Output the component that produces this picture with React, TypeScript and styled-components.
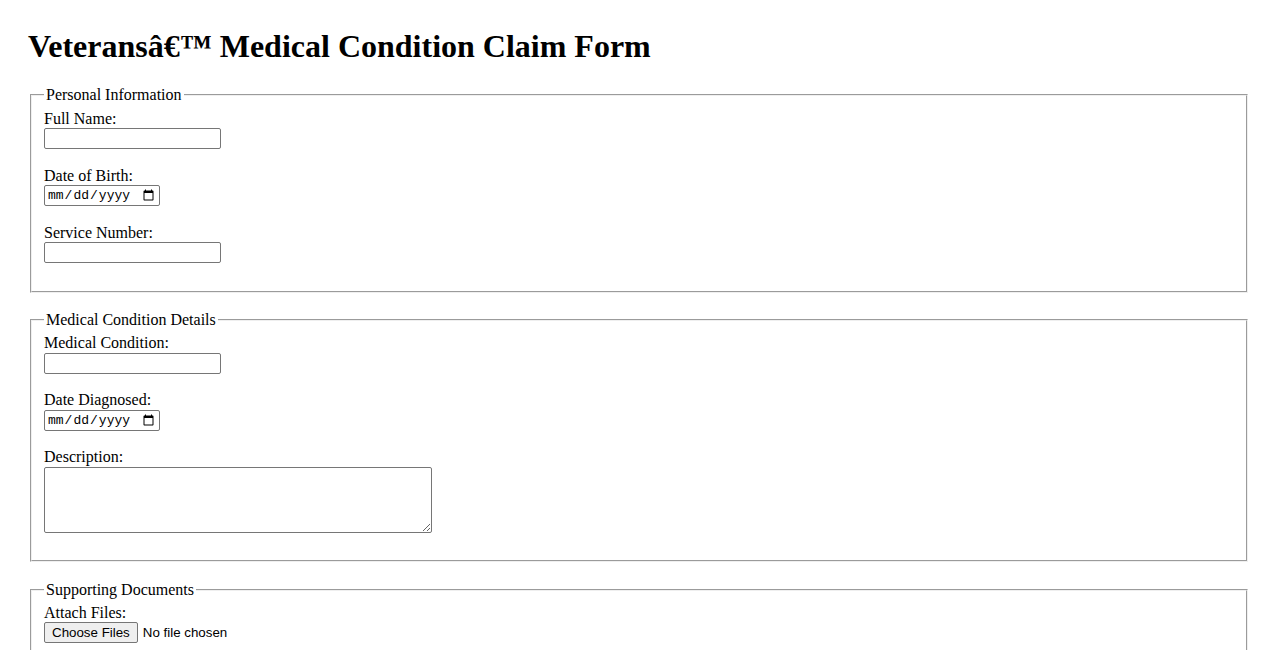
import React from "react";
import styled, { createGlobalStyle } from "styled-components";

const GlobalStyle = createGlobalStyle`
  html {
    scrollbar-width: none;
  }
  html::-webkit-scrollbar {
    display: none;
  }
  body {
    margin: 0;
    background: #ffffff;
    color: #000000;
    font-family: "Liberation Serif", "Times New Roman", serif;
    font-size: 16px;
    line-height: 1.15;
  }
`;

const Page = styled.main`
  padding: 28px 28px 40px 28px;
`;

const Title = styled.h1`
  margin: 0 0 21.44px;
  font-size: 32px;
  font-weight: bold;
  line-height: 1.15;
`;

const Form = styled.form`
  display: block;
`;

const Section = styled.fieldset`
  margin: 0 2px 18.4px;
  padding: 5px 0.75em 0.625em;
  border: 2px groove threedface;
  min-inline-size: min-content;
`;

const Legend = styled.legend`
  padding: 0 2px;
  font-size: 16px;
  line-height: 1.15;
`;

const Field = styled.div`
  display: block;
`;

const Label = styled.label`
  display: block;
  line-height: 1.15;
`;

const controlBase = `
  display: block;
  box-sizing: border-box;
  margin: 0 0 17.6px;
  border: 1px solid #767676;
  border-radius: 2px;
  background: #ffffff;
  color: #000000;
  font-family: "Liberation Sans", Arial, sans-serif;
  font-size: 13.33px;
`;

const TextInput = styled.input`
  ${controlBase}
  width: 177px;
  height: 21px;
  padding: 1px 2px;
`;

const DateInput = styled.input`
  ${controlBase}
  width: 116px;
  height: 21px;
  padding: 1px 2px;
  font-family: "Liberation Mono", "DejaVu Sans Mono", monospace;
  font-size: 13px;
`;

const TextArea = styled.textarea`
  ${controlBase}
  width: 388px;
  height: 66px;
  padding: 2px;
  resize: both;
`;

const FileInput = styled.input`
  ${controlBase}
  border: none;
  border-radius: 0;
  background: transparent;
  padding: 0;
  height: 21px;
  font-size: 13.33px;
  &::file-selector-button {
    height: 21px;
    margin-right: 5px;
    padding: 1px 7px;
    border: 1px solid #767676;
    border-radius: 2px;
    background: #efefef;
    color: #000000;
    font-family: "Liberation Sans", Arial, sans-serif;
    font-size: 13.33px;
  }
`;

const SubmitButton = styled.button`
  padding: 1px 6px;
  border: 1px solid #767676;
  border-radius: 2px;
  background: #efefef;
  font-family: "Liberation Sans", Arial, sans-serif;
  font-size: 13.33px;
`;

export default function App() {
  return (
    <>
      <GlobalStyle />
      <Page>
        <Title>Veteransâ€™ Medical Condition Claim Form</Title>
        <Form onSubmit={(e) => e.preventDefault()}>
          <Section>
            <Legend>Personal Information</Legend>
            <Field>
              <Label htmlFor="fullName">Full Name:</Label>
              <TextInput id="fullName" type="text" />
            </Field>
            <Field>
              <Label htmlFor="dob">Date of Birth:</Label>
              <DateInput id="dob" type="date" />
            </Field>
            <Field>
              <Label htmlFor="serviceNumber">Service Number:</Label>
              <TextInput id="serviceNumber" type="text" />
            </Field>
          </Section>

          <Section>
            <Legend>Medical Condition Details</Legend>
            <Field>
              <Label htmlFor="condition">Medical Condition:</Label>
              <TextInput id="condition" type="text" />
            </Field>
            <Field>
              <Label htmlFor="diagnosed">Date Diagnosed:</Label>
              <DateInput id="diagnosed" type="date" />
            </Field>
            <Field>
              <Label htmlFor="description">Description:</Label>
              <TextArea id="description" />
            </Field>
          </Section>

          <Section>
            <Legend>Supporting Documents</Legend>
            <Field>
              <Label htmlFor="files">Attach Files:</Label>
              <FileInput id="files" type="file" multiple />
            </Field>
          </Section>

          <SubmitButton type="submit">Submit Claim</SubmitButton>
        </Form>
      </Page>
    </>
  );
}
